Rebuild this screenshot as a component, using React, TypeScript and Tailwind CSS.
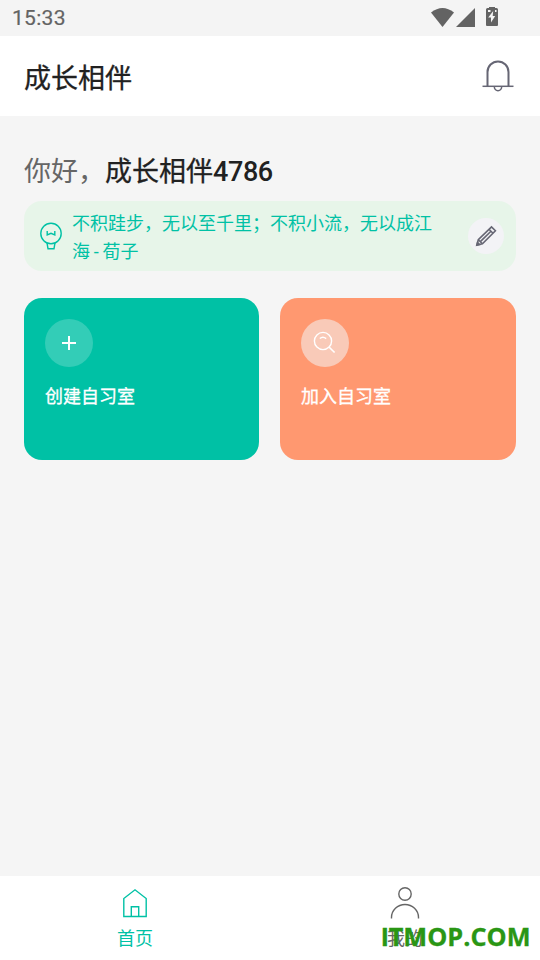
import type { ReactNode } from "react";

const QUOTE = "不积跬步，无以至千里；不积小流，无以成江海 - 荀子";

export default function App() {
  return (
    <div className="flex h-[960px] w-[540px] flex-col overflow-hidden bg-[#f5f5f5] font-['Roboto','Noto_Sans_CJK_SC',sans-serif] text-[#212121]">
      <StatusBar />
      <header className="flex h-20 shrink-0 items-center justify-between bg-white pr-6 pl-6">
        <h1 className="pt-1.5 text-[27px] leading-10 [-webkit-text-stroke:0.3px]">成长相伴</h1>
        <BellIcon />
      </header>

      <main className="flex flex-1 flex-col px-6 pt-[36px]">
        <h2 className="text-[27px] leading-10 whitespace-nowrap">
          <span className="text-[#666666]">你好，</span>
          <span className="[-webkit-text-stroke:0.3px]">成长相伴</span>
          <span className="font-medium tracking-[-0.4px]">4786</span>
        </h2>

        <section className="mt-[9px] flex h-[70px] items-center rounded-[18px] bg-[#e7f5e9] pr-3 pl-[15px]">
          <BulbIcon />
          <p className="ml-[9px] w-[366px] pt-[4px] text-[18px] leading-7 text-[#00c1a5] [word-spacing:-0.7px]">
            {QUOTE}
          </p>
          <button className="ml-auto grid h-9 w-9 place-items-center rounded-full bg-[#f3f3f6]">
            <PencilIcon />
          </button>
        </section>

        <div className="mt-[27px] flex gap-[21px]">
          <RoomCard
            label="创建自习室"
            className="w-[235px] bg-[#00c1a5]"
            circle="bg-[#33cdb7]"
            icon={<PlusIcon />}
          />
          <RoomCard
            label="加入自习室"
            className="w-[236px] bg-[#ff9870]"
            circle="bg-[#f9cab8]"
            icon={<SearchIcon />}
          />
        </div>
      </main>

      <nav className="relative grid h-[84px] shrink-0 grid-cols-2 bg-white">
        <a className="flex flex-col items-center pt-[10px] text-[#00c1a5]">
          <HomeIcon />
          <span className="mt-[3px] text-[18px] leading-7">首页</span>
        </a>
        <a className="flex flex-col items-center pt-[10px] text-[#666666]">
          <UserIcon />
          <span className="mt-[3px] text-[18px] leading-7">我的</span>
        </a>
        <span className="absolute top-[43px] left-[381px] font-['Open_Sans',sans-serif] text-[25.3px] leading-[34px] font-bold whitespace-nowrap text-[#2a9614] [-webkit-text-stroke:0.3px]">
          <span className="font-['Lato',sans-serif] font-black">I</span>TMOP.COM
        </span>
      </nav>
    </div>
  );
}

function StatusBar() {
  return (
    <div className="flex h-9 shrink-0 items-center justify-between bg-[#f4f4f4] pl-3 text-[#636363]">
      <span className="text-[21px] leading-9 tracking-[0.3px] [-webkit-text-stroke:0.2px]">15:33</span>
      <svg width="70" height="36" viewBox="0 0 70 36" className="mr-[40px]" fill="currentColor">
        <path d="M1 12.5Q12.5 3.5 24 12.5L12.5 27Z" />
        <path d="M45 8V27H26Z" />
        <path
          fillRule="evenodd"
          d="M59 7h6v1h1.5q1.5 0 1.5 1.500v15.500q0 1-1 1H57q-1 0-1-1V9.500Q56 8 57.500 8H59ZM63.200 11l-5 6.500h2.800v5l4.200-6.500h-2.500Z"
        />
        <path d="M58 10h2.500v2H58ZM65 10h1.500v2H65Z" fill="#f4f4f4" />
      </svg>
    </div>
  );
}

function RoomCard({
  label,
  className,
  circle,
  icon,
}: {
  label: string;
  className: string;
  circle: string;
  icon: ReactNode;
}) {
  return (
    <button
      className={`flex h-[162px] flex-col items-start rounded-[18px] px-[21px] pt-[21px] text-white ${className}`}
    >
      <span className={`grid h-12 w-12 place-items-center rounded-full ${circle}`}>{icon}</span>
      <span className="mt-4 text-[18px] leading-7 [-webkit-text-stroke:0.3px]">{label}</span>
    </button>
  );
}

function BellIcon() {
  return (
    <svg width="36" height="36" viewBox="0 0 36 36" fill="none" stroke="#666674" strokeWidth="2">
      <path d="M7.500 28V14a10.500 10.500 0 0 1 21 0V28" />
      <path d="M2.500 28.300h31" strokeWidth="1.500" />
      <path d="M14.300 28.500a3.700 4.200 0 0 0 7.400 0" strokeWidth="1.500" />
    </svg>
  );
}

function BulbIcon() {
  return (
    <svg width="24" height="30" viewBox="0 0 24 30" fill="none" stroke="#00c1a5" strokeWidth="1.400">
      <circle cx="12" cy="12.500" r="10.200" />
      <path d="M8.200 10v4l3.800-1.700 3.800 1.700v-4" />
      <path d="M8 21.900l1 5.800h6l1-5.800" />
    </svg>
  );
}

function PencilIcon() {
  return (
    <svg width="24" height="24" viewBox="0 0 24 24" fill="none" stroke="#666674" strokeWidth="1.600">
      <path d="M3 21l1.300-5.300L17.500 2.900l3.900 3.900L8.400 19.700Z" />
      <path d="M4.300 15.700l4.100 4M15 5.200l4 4M6.600 17.400L17.200 7" />
      <path d="M2.800 21.200l.7-2.700 2 2Z" fill="#666674" />
    </svg>
  );
}

function PlusIcon() {
  return (
    <svg width="24" height="24" viewBox="0 0 24 24" fill="none" stroke="white" strokeWidth="2">
      <path d="M12 5v14M5 12h14" />
    </svg>
  );
}

function SearchIcon() {
  return (
    <svg width="24" height="24" viewBox="0 0 24 24" fill="none" stroke="white" strokeWidth="1.400">
      <circle cx="10" cy="10" r="8.600" />
      <path d="M16 16l5.600 5.500" strokeWidth="1.700" />
      <path d="M6.800 7.600q3-2.700 6.400 0" />
    </svg>
  );
}

function HomeIcon() {
  return (
    <svg width="36" height="36" viewBox="0 0 36 36" fill="none" stroke="currentColor" strokeWidth="1.400">
      <path d="M6.800 30.500V12.500L18 3.800l11.200 8.700v18Z" />
      <path d="M14.300 30.500v-9.800h7.400v9.800" />
    </svg>
  );
}

function UserIcon() {
  return (
    <svg width="36" height="36" viewBox="0 0 36 36" fill="none" stroke="currentColor" strokeWidth="1.400">
      <circle cx="18" cy="8" r="6.200" />
      <path d="M4.500 32.500v-1a13.500 13 0 0 1 27 0v1" />
    </svg>
  );
}
